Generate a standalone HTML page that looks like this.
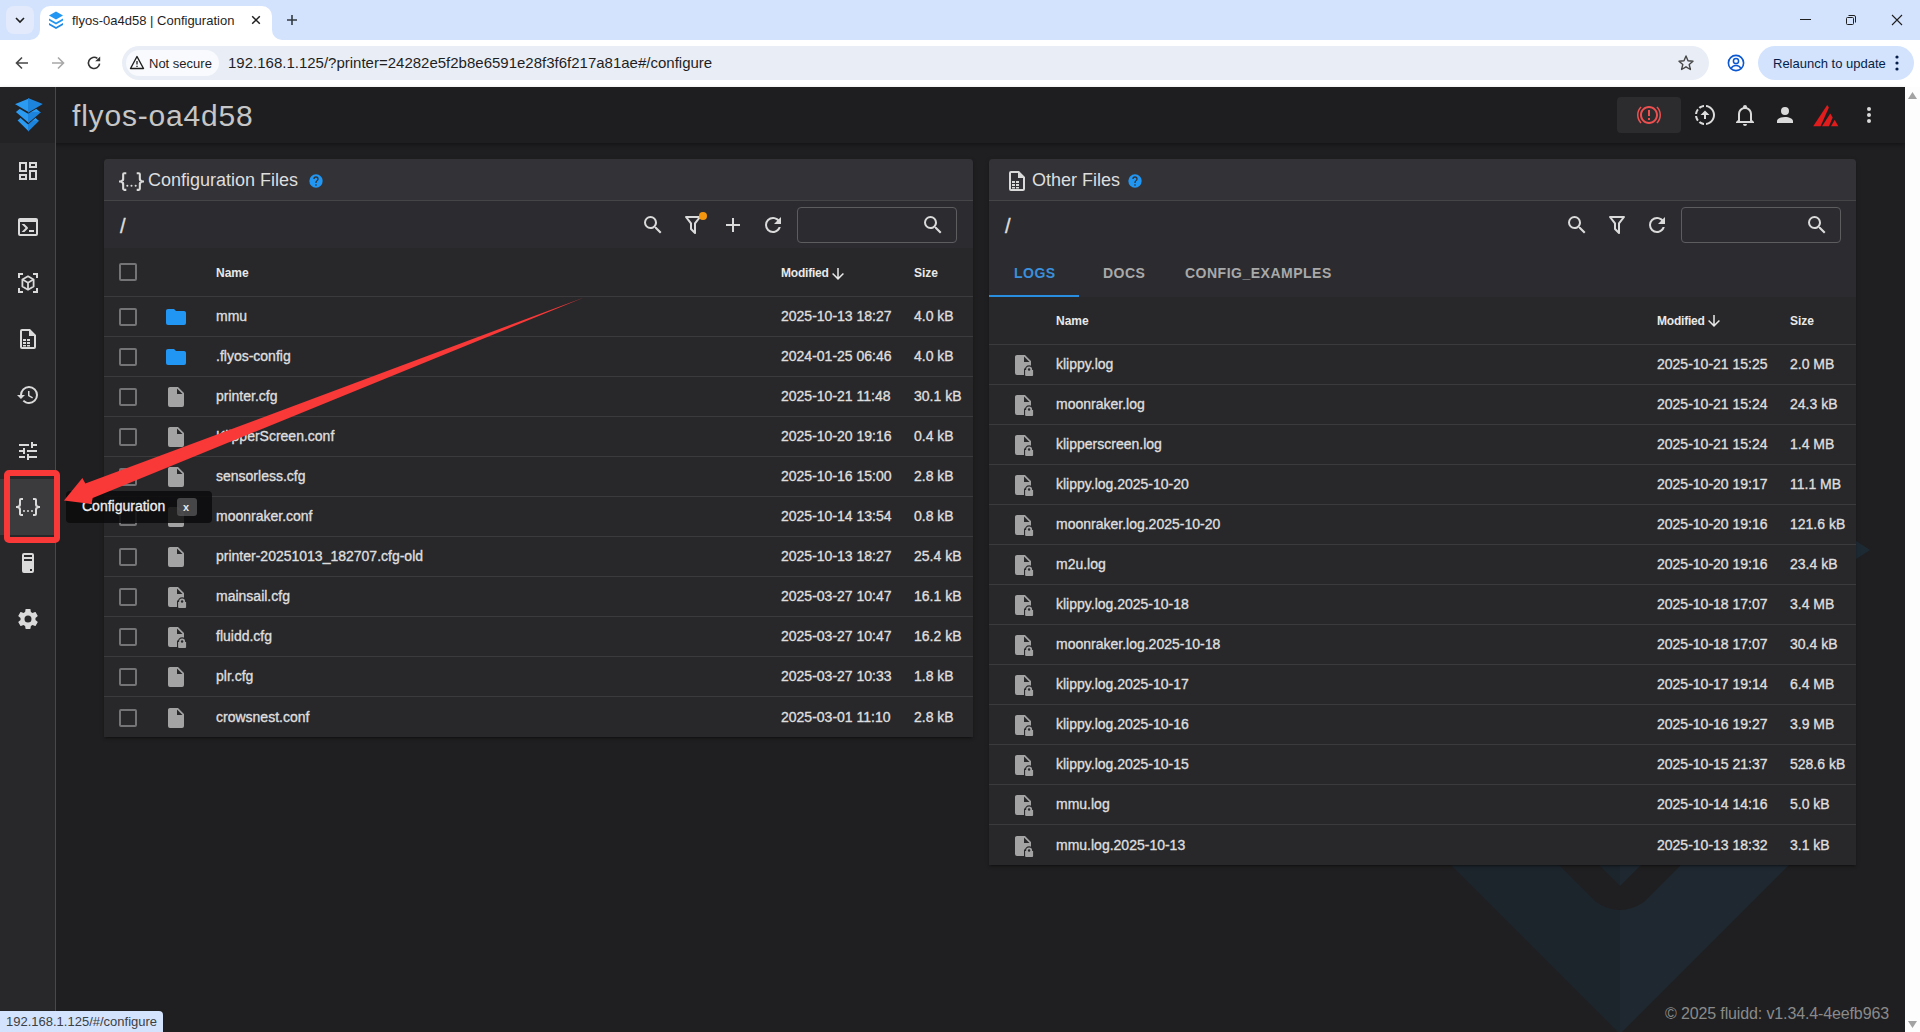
<!DOCTYPE html>
<html><head><meta charset="utf-8"><title>fluidd</title><style>
*{margin:0;padding:0;box-sizing:border-box}
html,body{width:1920px;height:1032px;overflow:hidden;background:#1f1f21;font-family:"Liberation Sans",sans-serif}
.a{position:absolute}
.t{position:absolute;white-space:nowrap;line-height:1}
</style></head><body>
<div class="a" style="left:0;top:0;width:1920px;height:40px;background:#d3e3fd"></div>
<div class="a" style="left:40px;top:6px;width:232px;height:34px;background:#fff;border-radius:10px 10px 0 0"></div>
<div class="a" style="left:30px;top:30px;width:10px;height:10px;background:#fff"></div><div class="a" style="left:30px;top:30px;width:10px;height:10px;background:#d3e3fd;border-radius:0 0 10px 0"></div>
<div class="a" style="left:272px;top:30px;width:10px;height:10px;background:#fff"></div><div class="a" style="left:272px;top:30px;width:10px;height:10px;background:#d3e3fd;border-radius:0 0 0 10px"></div>
<div class="a" style="left:6px;top:6px;width:28px;height:28px;border-radius:8px;background:#e2eafb"></div>
<svg class="a" style="left:13px;top:13px" width="14" height="14" viewBox="0 0 14 14"><path d="M3,5 L7,9 L11,5" fill="none" stroke="#1f1f1f" stroke-width="1.6"/></svg>
<div class="t" style="left:72px;top:14px;font-size:13px;color:#1f1f1f">flyos-0a4d58 | Configuration</div>
<svg class="a" style="left:48px;top:11px" width="16" height="18" viewBox="0 0 30 36"><path d="M15,1L29,9L15,17L1,9Z" fill="#2196f3"/><path d="M1,15L15,23L29,15L29,19L15,27L1,19Z" fill="#2196f3"/><path d="M1,24L15,32L29,24L29,28L15,36L1,28Z" fill="#1e88e5"/></svg>
<svg class="a" style="left:250px;top:14px" width="12" height="12" viewBox="0 0 12 12"><path d="M2.2,2.2L9.8,9.8M9.8,2.2L2.2,9.8" stroke="#1f1f1f" stroke-width="1.5"/></svg>
<svg class="a" style="left:285px;top:13px" width="14" height="14" viewBox="0 0 14 14"><path d="M7,2V12M2,7H12" stroke="#333a40" stroke-width="1.6"/></svg>
<div class="a" style="left:1800px;top:19px;width:11px;height:1px;background:#1f1f1f"></div>
<svg class="a" style="left:1845px;top:14px" width="12" height="12" viewBox="0 0 12 12"><rect x="1.5" y="3.5" width="7" height="7" rx="1" fill="none" stroke="#1f1f1f" stroke-width="1"/><path d="M3.5,1.5H9Q10.5,1.5 10.5,3V8.5" fill="none" stroke="#1f1f1f" stroke-width="1"/></svg>
<svg class="a" style="left:1891px;top:14px" width="12" height="12" viewBox="0 0 12 12"><path d="M1,1L11,11M11,1L1,11" stroke="#1f1f1f" stroke-width="1.1"/></svg>
<div class="a" style="left:0;top:40px;width:1920px;height:47px;background:#ffffff"></div>
<svg class="a" style="left:14px;top:55px" width="16" height="16" viewBox="0 0 16 16"><path d="M14,8H2.5M8,2.5L2.5,8L8,13.5" fill="none" stroke="#474747" stroke-width="1.6"/></svg>
<svg class="a" style="left:50px;top:55px" width="16" height="16" viewBox="0 0 16 16"><path d="M2,8H13.5M8,2.5L13.5,8L8,13.5" fill="none" stroke="#a8a8a8" stroke-width="1.6"/></svg>
<svg class="a" style="left:86px;top:55px" width="16" height="16" viewBox="0 0 16 16"><path d="M13.6,8.6A5.6,5.6 0 1,1 11.4,3.4" fill="none" stroke="#333" stroke-width="1.6"/><path d="M9.2,6.2L14.2,1.6V6.2Z" fill="#333"/></svg>
<div class="a" style="left:122px;top:46px;width:1587px;height:34px;border-radius:17px;background:#e9eef6"></div>
<div class="a" style="left:126px;top:50px;width:93px;height:26px;border-radius:13px;background:#f8fafd"></div>
<svg class="a" style="left:129px;top:55px" width="16" height="15" viewBox="0 0 16 15"><path d="M8,1.5L14.5,13.5H1.5Z" fill="none" stroke="#1f1f1f" stroke-width="1.4" stroke-linejoin="round"/><path d="M8,6V9.5M8,10.8V12" stroke="#1f1f1f" stroke-width="1.3"/></svg>
<div class="t" style="left:149px;top:57px;font-size:13px;color:#1f1f1f">Not secure</div>
<div class="t" style="left:228px;top:55px;font-size:15px;color:#1f1f1f">192.168.1.125/?printer=24282e5f2b8e6591e28f3f6f217a81ae#/configure</div>
<svg class="a" style="left:1677px;top:54px" width="18" height="18" viewBox="0 0 18 18"><path d="M9,2L11,6.8L16,7.2L12.2,10.5L13.4,15.5L9,12.8L4.6,15.5L5.8,10.5L2,7.2L7,6.8Z" fill="none" stroke="#474747" stroke-width="1.4" stroke-linejoin="round"/></svg>
<svg class="a" style="left:1726px;top:53px" width="20" height="20" viewBox="0 0 20 20"><circle cx="10" cy="10" r="7.6" fill="none" stroke="#0b57d0" stroke-width="1.6"/><circle cx="10" cy="8" r="2.6" fill="none" stroke="#0b57d0" stroke-width="1.5"/><path d="M5.2,15.2C6.5,13 8,12.4 10,12.4C12,12.4 13.5,13 14.8,15.2" fill="none" stroke="#0b57d0" stroke-width="1.5"/></svg>
<div class="a" style="left:1758px;top:46px;width:156px;height:34px;border-radius:17px;background:#d3e3fd"></div>
<div class="t" style="left:1773px;top:57px;font-size:13px;color:#041e49">Relaunch to update</div>
<svg class="a" style="left:1892px;top:54px" width="10" height="18" viewBox="0 0 10 18"><circle cx="5" cy="3" r="1.6" fill="#041e49"/><circle cx="5" cy="9" r="1.6" fill="#041e49"/><circle cx="5" cy="15" r="1.6" fill="#041e49"/></svg>
<div class="a" style="left:0;top:87px;width:1905px;height:945px;background:#1f1f21;overflow:hidden" id="pg">
</div>
<svg class="a" style="left:0;top:0" width="1905" height="1032" viewBox="0 0 1905 1032"><path d="M1446,860L1620,1034L1620,860Z" fill="#1d252c"/><path d="M1620,860L1620,1034L1794,860Z" fill="#1f2830"/><path d="M1554,860L1596,902Q1620,918 1644,902L1686,860Z" fill="#1f1f21"/><path d="M1594,860L1620,886L1620,860Z" fill="#1d252c"/><path d="M1620,860L1620,886L1646,860Z" fill="#1f2830"/><path d="M1850,537L1870,550L1850,563Z" fill="#1e2a33"/></svg>
<div class="a" style="left:0;top:87px;width:1905px;height:56px;background:#1e1e20;box-shadow:0 2px 4px rgba(0,0,0,.35)"></div>
<div class="a" style="left:0;top:87px;width:55px;height:56px;background:#232325"></div>
<svg class="a" style="left:0;top:86px" width="56" height="56" viewBox="0 0 56 56"><g stroke="#232325" stroke-width="1.6" stroke-linejoin="round"><path d="M28,23.5L39.4,34.5L28,45.7L16.6,34.5Z" fill="#2b9bf2"/><path d="M28,34.5L39.4,34.5L28,45.7Z" fill="#1c84dc" stroke="none"/><path d="M28,15L41.2,26L28,37.3L14.8,26Z" fill="#2b9bf2"/><path d="M28,26L41.2,26L28,37.3Z" fill="#1c84dc" stroke="none"/><path d="M28,12L42.8,18L28,26.7L13.2,18Z" fill="#2b9bf2"/><path d="M28,12L42.8,18L28,26.7Z" fill="#1c84dc" stroke="none"/></g></svg>
<div class="t" style="left:72px;top:101px;font-size:30px;color:#c6c6c6;letter-spacing:0.8px">flyos-oa4d58</div>
<div class="a" style="left:1617px;top:97px;width:64px;height:36px;border-radius:4px;background:#2c2c2f"></div>
<svg class="a" style="left:1637px;top:103px" width="24" height="24" viewBox="0 0 24 24"><path fill="#ee5050" d="M11,15H13V17H11V15M11,7H13V13H11V7M12,3C16.97,3 21,7.03 21,12C21,16.97 16.97,21 12,21C7.03,21 3,16.97 3,12C3,7.03 7.03,3 12,3M12,5C8.14,5 5,8.14 5,12C5,15.86 8.14,19 12,19C15.86,19 19,15.86 19,12C19,8.14 15.86,5 12,5M20.5,20.5C22.66,18.31 24,15.31 24,12C24,8.69 22.66,5.69 20.5,3.5L19.42,4.58C21.32,6.5 22.5,9.11 22.5,12C22.5,14.9 21.32,17.5 19.42,19.42L20.5,20.5M4.58,19.42C2.68,17.5 1.5,14.9 1.5,12C1.5,9.11 2.68,6.5 4.58,4.58L3.5,3.5C1.34,5.69 0,8.69 0,12C0,15.31 1.34,18.31 3.5,20.5L4.58,19.42Z"/></svg>
<svg class="a" style="left:1693px;top:103px" width="24" height="24" viewBox="0 0 24 24"><path fill="#dcdcdc" d="M13,2.03V2.05L13,4.05C17.39,4.59 20.5,8.58 19.96,12.97C19.5,16.61 16.64,19.5 13,19.93V21.93C18.5,21.38 22.5,16.5 21.95,11C21.5,6.25 17.73,2.5 13,2.03M11,2.06C9.05,2.25 7.19,3 5.67,4.26L7.1,5.74C8.22,4.84 9.57,4.26 11,4.06V2.06M4.26,5.67C3,7.19 2.25,9.04 2.05,11H4.05C4.24,9.58 4.8,8.23 5.69,7.1L4.26,5.67M2.06,13C2.26,14.96 3.03,16.81 4.27,18.33L5.69,16.9C4.81,15.77 4.24,14.42 4.06,13H2.06M7.1,18.37L5.67,19.74C7.18,21 9.04,21.79 11,22V20C9.58,19.82 8.23,19.25 7.1,18.37M12,7.5L16.5,12H13V16H11V12H7.5L12,7.5Z"/></svg>
<svg class="a" style="left:1733px;top:103px;" width="24" height="24" viewBox="0 0 24 24"><path fill="#dadada" d="M10,21H14A2,2 0 0,1 12,23A2,2 0 0,1 10,21M21,19V20H3V19L5,17V11C5,7.9 7.03,5.17 10,4.29C10,4.19 10,4.1 10,4A2,2 0 0,1 12,2A2,2 0 0,1 14,4C14,4.1 14,4.19 14,4.29C16.97,5.17 19,7.9 19,11V17L21,19M17,11A5,5 0 0,0 12,6A5,5 0 0,0 7,11V18H17V11Z"/></svg>
<svg class="a" style="left:1773px;top:103px;" width="24" height="24" viewBox="0 0 24 24"><path fill="#dadada" d="M12,4A4,4 0 0,1 16,8A4,4 0 0,1 12,12A4,4 0 0,1 8,8A4,4 0 0,1 12,4M12,14C16.42,14 20,15.79 20,18V20H4V18C4,15.79 7.58,14 12,14Z"/></svg>
<svg class="a" style="left:1812px;top:104px" width="28" height="24" viewBox="0 0 28 24"><path d="M1.2,22.3L15.2,0.9L16.9,3.6L8.6,22.3Z" fill="#e01c1c"/><path d="M10,22.3L18.3,9.6L20.7,13.4L17,22.3Z" fill="#e01c1c"/><path d="M19,22.3L22.7,15.7L26.3,22.3Z" fill="#e01c1c"/></svg>
<svg class="a" style="left:1857px;top:103px;" width="24" height="24" viewBox="0 0 24 24"><path fill="#dadada" d="M12,16A2,2 0 0,1 14,18A2,2 0 0,1 12,20A2,2 0 0,1 10,18A2,2 0 0,1 12,16M12,10A2,2 0 0,1 14,12A2,2 0 0,1 12,14A2,2 0 0,1 10,12A2,2 0 0,1 12,10M12,4A2,2 0 0,1 14,6A2,2 0 0,1 12,8A2,2 0 0,1 10,6A2,2 0 0,1 12,4Z"/></svg>
<div class="a" style="left:0;top:143px;width:55px;height:889px;background:#28282b"></div>
<div class="a" style="left:55px;top:87px;width:1px;height:945px;background:#48484b"></div>
<div class="a" style="left:0;top:479px;width:55px;height:56px;background:#3b3b3e"></div>
<svg class="a" style="left:16px;top:159px;" width="24" height="24" viewBox="0 0 24 24"><path fill="#dadada" d="M19,5V7H15V5H19M9,5V11H5V5H9M19,13V19H15V13H19M9,17V19H5V17H9M21,3H13V9H21V3M11,3H3V13H11V3M21,11H13V21H21V11M11,15H3V21H11V15Z"/></svg>
<svg class="a" style="left:16px;top:215px;" width="24" height="24" viewBox="0 0 24 24"><path fill="#dadada" d="M20,19V7H4V19H20M20,3A2,2 0 0,1 22,5V19A2,2 0 0,1 20,21H4A2,2 0 0,1 2,19V5C2,3.89 2.9,3 4,3H20M13,17V15H18V17H13M9.58,13L5.57,9H8.4L11.7,12.3C12.09,12.69 12.09,13.33 11.7,13.72L8.42,17H5.59L9.58,13Z"/></svg>
<svg class="a" style="left:16px;top:271px" width="24" height="24" viewBox="0 0 24 24"><path d="M3,7V3H7M17,3H21V7M21,17V21H17M7,21H3V17" fill="none" stroke="#dadada" stroke-width="2"/><path d="M12,5.3L17.6,8.5V15.5L12,18.7L6.4,15.5V8.5Z" fill="none" stroke="#dadada" stroke-width="1.8" stroke-linejoin="round"/><path d="M6.6,8.6L12,11.8L17.4,8.6M12,11.8V18.5" fill="none" stroke="#dadada" stroke-width="1.8"/></svg>
<svg class="a" style="left:16px;top:327px" width="24" height="24" viewBox="0 0 24 24"><path d="M14,2H6A2,2 0 0,0 4,4V20A2,2 0 0,0 6,22H18A2,2 0 0,0 20,20V8L14,2M18,20H6V4H13V9H18V20Z" fill="#dadada"/><path d="M7,12H10V14H7ZM11,12H14V14H11ZM7,15H10V17H7ZM11,15H14V17H11ZM7,18H10V19.5H7ZM11,18H14V19.5H11Z" fill="#dadada"/></svg>
<svg class="a" style="left:16px;top:383px;" width="24" height="24" viewBox="0 0 24 24"><path fill="#dadada" d="M13.5,8H12V13L16.28,15.54L17,14.33L13.5,12.25V8M13,3A9,9 0 0,0 4,12H1L4.96,16.03L9,12H6A7,7 0 0,1 13,5A7,7 0 0,1 20,12A7,7 0 0,1 13,19C11.07,19 9.32,18.21 8.06,16.94L6.64,18.36C8.27,20 10.5,21 13,21A9,9 0 0,0 22,12A9,9 0 0,0 13,3"/></svg>
<svg class="a" style="left:16px;top:439px;" width="24" height="24" viewBox="0 0 24 24"><path fill="#dadada" d="M3,17V19H9V17H3M3,5V7H13V5H3M13,21V19H21V17H13V15H11V21H13M7,9V11H3V13H7V15H9V9H7M21,13V11H11V13H21M15,9H17V7H21V5H17V3H15V9Z"/></svg>
<svg class="a" style="left:16px;top:495px;" width="24" height="24" viewBox="0 0 24 24"><path fill="#dadada" d="M5,3H7V5H5V10A2,2 0 0,1 3,12A2,2 0 0,1 5,14V19H7V21H5C3.93,20.73 3,20.1 3,19V15A2,2 0 0,0 1,13H0V11H1A2,2 0 0,0 3,9V5A2,2 0 0,1 5,3M19,3A2,2 0 0,1 21,5V9A2,2 0 0,0 23,11H24V13H23A2,2 0 0,0 21,15V19A2,2 0 0,1 19,21H17V19H19V14A2,2 0 0,1 21,12A2,2 0 0,1 19,10V5H17V3H19M12,15A1,1 0 0,1 13,16A1,1 0 0,1 12,17A1,1 0 0,1 11,16A1,1 0 0,1 12,15M8,15A1,1 0 0,1 9,16A1,1 0 0,1 8,17A1,1 0 0,1 7,16A1,1 0 0,1 8,15M16,15A1,1 0 0,1 17,16A1,1 0 0,1 16,17A1,1 0 0,1 15,16A1,1 0 0,1 16,15Z"/></svg>
<svg class="a" style="left:16px;top:551px" width="24" height="24" viewBox="0 0 24 24"><path d="M8,2H16A2,2 0 0,1 18,4V20A2,2 0 0,1 16,22H8A2,2 0 0,1 6,20V4A2,2 0 0,1 8,2M8,4V6H16V4H8M16,8H8V10H16V8M16,18H14V20H16V18Z" fill="#dadada"/></svg>
<svg class="a" style="left:16px;top:607px;" width="24" height="24" viewBox="0 0 24 24"><path fill="#dadada" d="M12,15.5A3.5,3.5 0 0,1 8.5,12A3.5,3.5 0 0,1 12,8.5A3.5,3.5 0 0,1 15.5,12A3.5,3.5 0 0,1 12,15.5M19.43,12.97C19.47,12.65 19.5,12.33 19.5,12C19.5,11.67 19.47,11.34 19.43,11L21.54,9.37C21.73,9.22 21.78,8.95 21.66,8.73L19.66,5.27C19.54,5.05 19.27,4.96 19.05,5.05L16.56,6.05C16.04,5.66 15.5,5.32 14.87,5.07L14.5,2.42C14.46,2.18 14.25,2 14,2H10C9.75,2 9.54,2.18 9.5,2.42L9.13,5.07C8.5,5.32 7.96,5.66 7.44,6.05L4.95,5.05C4.73,4.96 4.46,5.05 4.34,5.27L2.34,8.73C2.21,8.95 2.27,9.22 2.46,9.37L4.57,11C4.53,11.34 4.5,11.67 4.5,12C4.5,12.33 4.53,12.65 4.57,12.97L2.46,14.63C2.27,14.78 2.21,15.05 2.34,15.27L4.34,18.73C4.46,18.95 4.73,19.03 4.95,18.95L7.44,17.94C7.96,18.34 8.5,18.68 9.13,18.93L9.5,21.58C9.54,21.82 9.75,22 10,22H14C14.25,22 14.46,21.82 14.5,21.58L14.87,18.93C15.5,18.67 16.04,18.34 16.56,17.94L19.05,18.95C19.27,19.03 19.54,18.95 19.66,18.73L21.66,15.27C21.78,15.05 21.73,14.78 21.54,14.63L19.43,12.97Z"/></svg>
<div class="a" style="left:4px;top:470px;width:56px;height:73px;border:6px solid #f93838;border-radius:5px"></div>
<div class="a" style="left:104px;top:159px;width:869px;height:578px;background:#28282b;border-radius:4px 4px 0 0;box-shadow:0 3px 1px -2px rgba(0,0,0,.2),0 2px 2px 0 rgba(0,0,0,.14),0 1px 5px 0 rgba(0,0,0,.12);overflow:hidden">
<div class="a" style="left:0;top:0;width:869px;height:42px;background:#333337;border-bottom:1px solid #454548"></div>
<div class="a" style="left:0;top:42px;width:869px;height:47px;background:#2c2c30"></div>
</div>
<svg class="a" style="left:119px;top:169px;" width="25" height="25" viewBox="0 0 24 24"><path fill="#dadada" d="M5,3H7V5H5V10A2,2 0 0,1 3,12A2,2 0 0,1 5,14V19H7V21H5C3.93,20.73 3,20.1 3,19V15A2,2 0 0,0 1,13H0V11H1A2,2 0 0,0 3,9V5A2,2 0 0,1 5,3M19,3A2,2 0 0,1 21,5V9A2,2 0 0,0 23,11H24V13H23A2,2 0 0,0 21,15V19A2,2 0 0,1 19,21H17V19H19V14A2,2 0 0,1 21,12A2,2 0 0,1 19,10V5H17V3H19M12,15A1,1 0 0,1 13,16A1,1 0 0,1 12,17A1,1 0 0,1 11,16A1,1 0 0,1 12,15M8,15A1,1 0 0,1 9,16A1,1 0 0,1 8,17A1,1 0 0,1 7,16A1,1 0 0,1 8,15M16,15A1,1 0 0,1 17,16A1,1 0 0,1 16,17A1,1 0 0,1 15,16A1,1 0 0,1 16,15Z"/></svg>
<div class="t" style="left:148px;top:171px;font-size:18px;color:#dedede">Configuration Files</div>
<svg class="a" style="left:308px;top:173px;" width="16" height="16" viewBox="0 0 24 24"><path fill="#2196f3" d="M15.07,11.25L14.17,12.17C13.45,12.89 13,13.5 13,15H11V14.5C11,13.39 11.45,12.39 12.17,11.67L13.41,10.41C13.78,10.05 14,9.55 14,9C14,7.89 13.1,7 12,7A2,2 0 0,0 10,9H8A4,4 0 0,1 12,5A4,4 0 0,1 16,9C16,9.88 15.64,10.67 15.07,11.25M13,19H11V17H13M12,2A10,10 0 0,0 2,12A10,10 0 0,0 12,22A10,10 0 0,0 22,12C22,6.47 17.5,2 12,2Z"/></svg>
<div class="t" style="left:120px;top:216px;font-size:20px;color:#dedede;-webkit-text-stroke:0.4px #dedede">/</div>
<svg class="a" style="left:640.5px;top:213px;" width="24" height="24" viewBox="0 0 24 24"><path fill="#dadada" d="M9.5,3A6.5,6.5 0 0,1 16,9.5C16,11.11 15.41,12.59 14.44,13.73L14.71,14H15.5L20.5,19L19,20.5L14,15.5V14.71L13.73,14.44C12.59,15.41 11.11,16 9.5,16A6.5,6.5 0 0,1 3,9.5A6.5,6.5 0 0,1 9.5,3M9.5,5C7,5 5,7 5,9.5C5,12 7,14 9.5,14C12,14 14,12 14,9.5C14,7 12,5 9.5,5Z"/></svg>
<svg class="a" style="left:681px;top:213px;" width="24" height="24" viewBox="0 0 24 24"><path fill="#dadada" d="M15,19.88C15.04,20.18 14.94,20.5 14.71,20.71C14.32,21.1 13.69,21.1 13.3,20.71L9.29,16.7C9.06,16.47 8.96,16.16 9,15.87V10.75L4.21,4.62C3.87,4.19 3.95,3.56 4.38,3.22C4.57,3.08 4.78,3 5,3V3H19V3C19.22,3 19.43,3.08 19.62,3.22C20.05,3.56 20.13,4.19 19.79,4.62L15,10.75V19.88M7.04,5L11,10.06V15.58L13,17.58V10.05L16.96,5H7.04Z"/></svg>
<div class="a" style="left:699px;top:211.5px;width:8px;height:8px;border-radius:50%;background:#f5960f"></div>
<svg class="a" style="left:721px;top:213px;" width="24" height="24" viewBox="0 0 24 24"><path fill="#dadada" d="M19,13H13V19H11V13H5V11H11V5H13V11H19V13Z"/></svg>
<svg class="a" style="left:761px;top:213px;" width="24" height="24" viewBox="0 0 24 24"><path fill="#dadada" d="M17.65,6.35C16.2,4.9 14.21,4 12,4A8,8 0 0,0 4,12A8,8 0 0,0 12,20C15.73,20 18.84,17.45 19.73,14H17.65C16.83,16.33 14.61,18 12,18A6,6 0 0,1 6,12A6,6 0 0,1 12,6C13.66,6 15.14,6.69 16.22,7.78L13,11H20V4L17.65,6.35Z"/></svg>
<div class="a" style="left:797px;top:207px;width:160px;height:36px;border:1px solid #5d5d60;border-radius:4px"></div>
<svg class="a" style="left:920.5px;top:213px;" width="24" height="24" viewBox="0 0 24 24"><path fill="#dadada" d="M9.5,3A6.5,6.5 0 0,1 16,9.5C16,11.11 15.41,12.59 14.44,13.73L14.71,14H15.5L20.5,19L19,20.5L14,15.5V14.71L13.73,14.44C12.59,15.41 11.11,16 9.5,16A6.5,6.5 0 0,1 3,9.5A6.5,6.5 0 0,1 9.5,3M9.5,5C7,5 5,7 5,9.5C5,12 7,14 9.5,14C12,14 14,12 14,9.5C14,7 12,5 9.5,5Z"/></svg>
<div class="a" style="left:119px;top:263px;width:18px;height:18px;border:2px solid #747477;border-radius:2px"></div>
<div class="t" style="left:216px;top:267px;font-size:12px;font-weight:bold;color:#e8e8e8">Name</div>
<div class="t" style="left:781px;top:267px;font-size:12px;font-weight:bold;letter-spacing:-0.2px;color:#e8e8e8">Modified</div>
<svg class="a" style="left:829px;top:264.5px;" width="18" height="18" viewBox="0 0 24 24"><path fill="#e8e8e8" d="M11,4H13V16L18.5,10.5L19.92,11.92L12,19.84L4.08,11.92L5.5,10.5L11,16V4Z"/></svg>
<div class="t" style="left:914px;top:267px;font-size:12px;font-weight:bold;color:#e8e8e8">Size</div>
<div class="a" style="left:104px;top:296px;width:869px;height:1px;background:#3b3b3e"></div>
<div class="a" style="left:119px;top:308px;width:18px;height:18px;border:2px solid #747477;border-radius:2px"></div>
<svg class="a" style="left:164px;top:305px;" width="24" height="24" viewBox="0 0 24 24"><path fill="#2196f3" d="M10,4H4C2.89,4 2,4.89 2,6V18A2,2 0 0,0 4,20H20A2,2 0 0,0 22,18V8C22,6.89 21.1,6 20,6H12L10,4Z"/></svg>
<div class="t" style="left:216px;top:309px;font-size:14px;color:#dedede;-webkit-text-stroke:0.35px #dedede">mmu</div>
<div class="t" style="left:781px;top:309px;font-size:14px;color:#dedede;-webkit-text-stroke:0.35px #dedede">2025-10-13 18:27</div>
<div class="t" style="left:914px;top:309px;font-size:14px;color:#dedede;-webkit-text-stroke:0.35px #dedede">4.0 kB</div>
<div class="a" style="left:104px;top:336px;width:869px;height:1px;background:#3b3b3e"></div>
<div class="a" style="left:119px;top:348px;width:18px;height:18px;border:2px solid #747477;border-radius:2px"></div>
<svg class="a" style="left:164px;top:345px;" width="24" height="24" viewBox="0 0 24 24"><path fill="#2196f3" d="M10,4H4C2.89,4 2,4.89 2,6V18A2,2 0 0,0 4,20H20A2,2 0 0,0 22,18V8C22,6.89 21.1,6 20,6H12L10,4Z"/></svg>
<div class="t" style="left:216px;top:349px;font-size:14px;color:#dedede;-webkit-text-stroke:0.35px #dedede">.flyos-config</div>
<div class="t" style="left:781px;top:349px;font-size:14px;color:#dedede;-webkit-text-stroke:0.35px #dedede">2024-01-25 06:46</div>
<div class="t" style="left:914px;top:349px;font-size:14px;color:#dedede;-webkit-text-stroke:0.35px #dedede">4.0 kB</div>
<div class="a" style="left:104px;top:376px;width:869px;height:1px;background:#3b3b3e"></div>
<div class="a" style="left:119px;top:388px;width:18px;height:18px;border:2px solid #747477;border-radius:2px"></div>
<svg class="a" style="left:164px;top:385px;" width="24" height="24" viewBox="0 0 24 24"><path fill="#a3a3a3" d="M13,9V3.5L18.5,9M6,2C4.89,2 4,2.89 4,4V20A2,2 0 0,0 6,22H18A2,2 0 0,0 20,20V8L14,2H6Z"/></svg>
<div class="t" style="left:216px;top:389px;font-size:14px;color:#dedede;-webkit-text-stroke:0.35px #dedede">printer.cfg</div>
<div class="t" style="left:781px;top:389px;font-size:14px;color:#dedede;-webkit-text-stroke:0.35px #dedede">2025-10-21 11:48</div>
<div class="t" style="left:914px;top:389px;font-size:14px;color:#dedede;-webkit-text-stroke:0.35px #dedede">30.1 kB</div>
<div class="a" style="left:104px;top:416px;width:869px;height:1px;background:#3b3b3e"></div>
<div class="a" style="left:119px;top:428px;width:18px;height:18px;border:2px solid #747477;border-radius:2px"></div>
<svg class="a" style="left:164px;top:425px;" width="24" height="24" viewBox="0 0 24 24"><path fill="#a3a3a3" d="M13,9V3.5L18.5,9M6,2C4.89,2 4,2.89 4,4V20A2,2 0 0,0 6,22H18A2,2 0 0,0 20,20V8L14,2H6Z"/></svg>
<div class="t" style="left:216px;top:429px;font-size:14px;color:#dedede;-webkit-text-stroke:0.35px #dedede">KlipperScreen.conf</div>
<div class="t" style="left:781px;top:429px;font-size:14px;color:#dedede;-webkit-text-stroke:0.35px #dedede">2025-10-20 19:16</div>
<div class="t" style="left:914px;top:429px;font-size:14px;color:#dedede;-webkit-text-stroke:0.35px #dedede">0.4 kB</div>
<div class="a" style="left:104px;top:456px;width:869px;height:1px;background:#3b3b3e"></div>
<div class="a" style="left:119px;top:468px;width:18px;height:18px;border:2px solid #747477;border-radius:2px"></div>
<svg class="a" style="left:164px;top:465px;" width="24" height="24" viewBox="0 0 24 24"><path fill="#a3a3a3" d="M13,9V3.5L18.5,9M6,2C4.89,2 4,2.89 4,4V20A2,2 0 0,0 6,22H18A2,2 0 0,0 20,20V8L14,2H6Z"/></svg>
<div class="t" style="left:216px;top:469px;font-size:14px;color:#dedede;-webkit-text-stroke:0.35px #dedede">sensorless.cfg</div>
<div class="t" style="left:781px;top:469px;font-size:14px;color:#dedede;-webkit-text-stroke:0.35px #dedede">2025-10-16 15:00</div>
<div class="t" style="left:914px;top:469px;font-size:14px;color:#dedede;-webkit-text-stroke:0.35px #dedede">2.8 kB</div>
<div class="a" style="left:104px;top:496px;width:869px;height:1px;background:#3b3b3e"></div>
<div class="a" style="left:119px;top:508px;width:18px;height:18px;border:2px solid #747477;border-radius:2px"></div>
<svg class="a" style="left:164px;top:505px;" width="24" height="24" viewBox="0 0 24 24"><path fill="#a3a3a3" d="M13,9V3.5L18.5,9M6,2C4.89,2 4,2.89 4,4V20A2,2 0 0,0 6,22H18A2,2 0 0,0 20,20V8L14,2H6Z"/></svg>
<div class="t" style="left:216px;top:509px;font-size:14px;color:#dedede;-webkit-text-stroke:0.35px #dedede">moonraker.conf</div>
<div class="t" style="left:781px;top:509px;font-size:14px;color:#dedede;-webkit-text-stroke:0.35px #dedede">2025-10-14 13:54</div>
<div class="t" style="left:914px;top:509px;font-size:14px;color:#dedede;-webkit-text-stroke:0.35px #dedede">0.8 kB</div>
<div class="a" style="left:104px;top:536px;width:869px;height:1px;background:#3b3b3e"></div>
<div class="a" style="left:119px;top:548px;width:18px;height:18px;border:2px solid #747477;border-radius:2px"></div>
<svg class="a" style="left:164px;top:545px;" width="24" height="24" viewBox="0 0 24 24"><path fill="#a3a3a3" d="M13,9V3.5L18.5,9M6,2C4.89,2 4,2.89 4,4V20A2,2 0 0,0 6,22H18A2,2 0 0,0 20,20V8L14,2H6Z"/></svg>
<div class="t" style="left:216px;top:549px;font-size:14px;color:#dedede;-webkit-text-stroke:0.35px #dedede">printer-20251013_182707.cfg-old</div>
<div class="t" style="left:781px;top:549px;font-size:14px;color:#dedede;-webkit-text-stroke:0.35px #dedede">2025-10-13 18:27</div>
<div class="t" style="left:914px;top:549px;font-size:14px;color:#dedede;-webkit-text-stroke:0.35px #dedede">25.4 kB</div>
<div class="a" style="left:104px;top:576px;width:869px;height:1px;background:#3b3b3e"></div>
<div class="a" style="left:119px;top:588px;width:18px;height:18px;border:2px solid #747477;border-radius:2px"></div>
<svg class="a" style="left:164px;top:585px" width="24" height="24" viewBox="0 0 24 24"><path fill="#a3a3a3" d="M13,9V3.5L18.5,9M6,2C4.89,2 4,2.89 4,4V20A2,2 0 0,0 6,22H18A2,2 0 0,0 20,20V8L14,2H6Z"/><path fill="#28282b" d="M13,15.5H23.2V24H13ZM13.9,16.4A4.2,4.2 0 0,1 22.3,16.4V17H13.9Z"/><path fill="#a3a3a3" d="M15.1,16.6A3,3 0 0,1 21.1,16.6V17.2H15.1ZM14.1,16.9H22.1V22A1,1 0 0,1 21.1,23H15.1A1,1 0 0,1 14.1,22Z"/><circle cx="18.1" cy="16.5" r="1.2" fill="#28282b"/></svg>
<div class="t" style="left:216px;top:589px;font-size:14px;color:#dedede;-webkit-text-stroke:0.35px #dedede">mainsail.cfg</div>
<div class="t" style="left:781px;top:589px;font-size:14px;color:#dedede;-webkit-text-stroke:0.35px #dedede">2025-03-27 10:47</div>
<div class="t" style="left:914px;top:589px;font-size:14px;color:#dedede;-webkit-text-stroke:0.35px #dedede">16.1 kB</div>
<div class="a" style="left:104px;top:616px;width:869px;height:1px;background:#3b3b3e"></div>
<div class="a" style="left:119px;top:628px;width:18px;height:18px;border:2px solid #747477;border-radius:2px"></div>
<svg class="a" style="left:164px;top:625px" width="24" height="24" viewBox="0 0 24 24"><path fill="#a3a3a3" d="M13,9V3.5L18.5,9M6,2C4.89,2 4,2.89 4,4V20A2,2 0 0,0 6,22H18A2,2 0 0,0 20,20V8L14,2H6Z"/><path fill="#28282b" d="M13,15.5H23.2V24H13ZM13.9,16.4A4.2,4.2 0 0,1 22.3,16.4V17H13.9Z"/><path fill="#a3a3a3" d="M15.1,16.6A3,3 0 0,1 21.1,16.6V17.2H15.1ZM14.1,16.9H22.1V22A1,1 0 0,1 21.1,23H15.1A1,1 0 0,1 14.1,22Z"/><circle cx="18.1" cy="16.5" r="1.2" fill="#28282b"/></svg>
<div class="t" style="left:216px;top:629px;font-size:14px;color:#dedede;-webkit-text-stroke:0.35px #dedede">fluidd.cfg</div>
<div class="t" style="left:781px;top:629px;font-size:14px;color:#dedede;-webkit-text-stroke:0.35px #dedede">2025-03-27 10:47</div>
<div class="t" style="left:914px;top:629px;font-size:14px;color:#dedede;-webkit-text-stroke:0.35px #dedede">16.2 kB</div>
<div class="a" style="left:104px;top:656px;width:869px;height:1px;background:#3b3b3e"></div>
<div class="a" style="left:119px;top:668px;width:18px;height:18px;border:2px solid #747477;border-radius:2px"></div>
<svg class="a" style="left:164px;top:665px;" width="24" height="24" viewBox="0 0 24 24"><path fill="#a3a3a3" d="M13,9V3.5L18.5,9M6,2C4.89,2 4,2.89 4,4V20A2,2 0 0,0 6,22H18A2,2 0 0,0 20,20V8L14,2H6Z"/></svg>
<div class="t" style="left:216px;top:669px;font-size:14px;color:#dedede;-webkit-text-stroke:0.35px #dedede">plr.cfg</div>
<div class="t" style="left:781px;top:669px;font-size:14px;color:#dedede;-webkit-text-stroke:0.35px #dedede">2025-03-27 10:33</div>
<div class="t" style="left:914px;top:669px;font-size:14px;color:#dedede;-webkit-text-stroke:0.35px #dedede">1.8 kB</div>
<div class="a" style="left:104px;top:696px;width:869px;height:1px;background:#3b3b3e"></div>
<div class="a" style="left:119px;top:709px;width:18px;height:18px;border:2px solid #747477;border-radius:2px"></div>
<svg class="a" style="left:164px;top:706px;" width="24" height="24" viewBox="0 0 24 24"><path fill="#a3a3a3" d="M13,9V3.5L18.5,9M6,2C4.89,2 4,2.89 4,4V20A2,2 0 0,0 6,22H18A2,2 0 0,0 20,20V8L14,2H6Z"/></svg>
<div class="t" style="left:216px;top:710px;font-size:14px;color:#dedede;-webkit-text-stroke:0.35px #dedede">crowsnest.conf</div>
<div class="t" style="left:781px;top:710px;font-size:14px;color:#dedede;-webkit-text-stroke:0.35px #dedede">2025-03-01 11:10</div>
<div class="t" style="left:914px;top:710px;font-size:14px;color:#dedede;-webkit-text-stroke:0.35px #dedede">2.8 kB</div>
<div class="a" style="left:989px;top:159px;width:867px;height:706px;background:#28282b;border-radius:4px 4px 0 0;box-shadow:0 3px 1px -2px rgba(0,0,0,.2),0 2px 2px 0 rgba(0,0,0,.14),0 1px 5px 0 rgba(0,0,0,.12);overflow:hidden">
<div class="a" style="left:0;top:0;width:867px;height:42px;background:#333337;border-bottom:1px solid #454548"></div>
<div class="a" style="left:0;top:42px;width:867px;height:96px;background:#2c2c30"></div>
<div class="a" style="left:0;top:136px;width:90px;height:2px;background:#2a8ee0"></div>
</div>
<svg class="a" style="left:1005px;top:169px" width="24" height="24" viewBox="0 0 24 24"><path d="M14,2H6A2,2 0 0,0 4,4V20A2,2 0 0,0 6,22H18A2,2 0 0,0 20,20V8L14,2M18,20H6V4H13V9H18V20Z" fill="#dadada"/><path d="M7,12H10V14H7ZM11,12H14V14H11ZM7,15H10V17H7ZM11,15H14V17H11ZM7,18H10V19.5H7ZM11,18H14V19.5H11Z" fill="#dadada"/></svg>
<div class="t" style="left:1032px;top:171px;font-size:18px;color:#dedede">Other Files</div>
<svg class="a" style="left:1127px;top:172.5px;" width="16" height="16" viewBox="0 0 24 24"><path fill="#2196f3" d="M15.07,11.25L14.17,12.17C13.45,12.89 13,13.5 13,15H11V14.5C11,13.39 11.45,12.39 12.17,11.67L13.41,10.41C13.78,10.05 14,9.55 14,9C14,7.89 13.1,7 12,7A2,2 0 0,0 10,9H8A4,4 0 0,1 12,5A4,4 0 0,1 16,9C16,9.88 15.64,10.67 15.07,11.25M13,19H11V17H13M12,2A10,10 0 0,0 2,12A10,10 0 0,0 12,22A10,10 0 0,0 22,12C22,6.47 17.5,2 12,2Z"/></svg>
<div class="t" style="left:1005px;top:216px;font-size:20px;color:#dedede;-webkit-text-stroke:0.4px #dedede">/</div>
<svg class="a" style="left:1564.5px;top:213px;" width="24" height="24" viewBox="0 0 24 24"><path fill="#dadada" d="M9.5,3A6.5,6.5 0 0,1 16,9.5C16,11.11 15.41,12.59 14.44,13.73L14.71,14H15.5L20.5,19L19,20.5L14,15.5V14.71L13.73,14.44C12.59,15.41 11.11,16 9.5,16A6.5,6.5 0 0,1 3,9.5A6.5,6.5 0 0,1 9.5,3M9.5,5C7,5 5,7 5,9.5C5,12 7,14 9.5,14C12,14 14,12 14,9.5C14,7 12,5 9.5,5Z"/></svg>
<svg class="a" style="left:1605px;top:213px;" width="24" height="24" viewBox="0 0 24 24"><path fill="#dadada" d="M15,19.88C15.04,20.18 14.94,20.5 14.71,20.71C14.32,21.1 13.69,21.1 13.3,20.71L9.29,16.7C9.06,16.47 8.96,16.16 9,15.87V10.75L4.21,4.62C3.87,4.19 3.95,3.56 4.38,3.22C4.57,3.08 4.78,3 5,3V3H19V3C19.22,3 19.43,3.08 19.62,3.22C20.05,3.56 20.13,4.19 19.79,4.62L15,10.75V19.88M7.04,5L11,10.06V15.58L13,17.58V10.05L16.96,5H7.04Z"/></svg>
<svg class="a" style="left:1645px;top:213px;" width="24" height="24" viewBox="0 0 24 24"><path fill="#dadada" d="M17.65,6.35C16.2,4.9 14.21,4 12,4A8,8 0 0,0 4,12A8,8 0 0,0 12,20C15.73,20 18.84,17.45 19.73,14H17.65C16.83,16.33 14.61,18 12,18A6,6 0 0,1 6,12A6,6 0 0,1 12,6C13.66,6 15.14,6.69 16.22,7.78L13,11H20V4L17.65,6.35Z"/></svg>
<div class="a" style="left:1681px;top:207px;width:160px;height:36px;border:1px solid #5d5d60;border-radius:4px"></div>
<svg class="a" style="left:1804.5px;top:213px;" width="24" height="24" viewBox="0 0 24 24"><path fill="#dadada" d="M9.5,3A6.5,6.5 0 0,1 16,9.5C16,11.11 15.41,12.59 14.44,13.73L14.71,14H15.5L20.5,19L19,20.5L14,15.5V14.71L13.73,14.44C12.59,15.41 11.11,16 9.5,16A6.5,6.5 0 0,1 3,9.5A6.5,6.5 0 0,1 9.5,3M9.5,5C7,5 5,7 5,9.5C5,12 7,14 9.5,14C12,14 14,12 14,9.5C14,7 12,5 9.5,5Z"/></svg>
<div class="t" style="left:1014px;top:266px;font-size:14px;font-weight:bold;letter-spacing:0.5px;color:#3a90dc">LOGS</div>
<div class="t" style="left:1103px;top:266px;font-size:14px;font-weight:bold;letter-spacing:0.5px;color:#a9a9a9">DOCS</div>
<div class="t" style="left:1185px;top:266px;font-size:14px;font-weight:bold;letter-spacing:0.5px;color:#a9a9a9">CONFIG_EXAMPLES</div>
<div class="t" style="left:1056px;top:315px;font-size:12px;font-weight:bold;color:#e8e8e8">Name</div>
<div class="t" style="left:1657px;top:315px;font-size:12px;font-weight:bold;letter-spacing:-0.2px;color:#e8e8e8">Modified</div>
<svg class="a" style="left:1705px;top:311.5px;" width="18" height="18" viewBox="0 0 24 24"><path fill="#e8e8e8" d="M11,4H13V16L18.5,10.5L19.92,11.92L12,19.84L4.08,11.92L5.5,10.5L11,16V4Z"/></svg>
<div class="t" style="left:1790px;top:315px;font-size:12px;font-weight:bold;color:#e8e8e8">Size</div>
<div class="a" style="left:989px;top:344px;width:867px;height:1px;background:#3b3b3e"></div>
<svg class="a" style="left:1011px;top:353px" width="24" height="24" viewBox="0 0 24 24"><path fill="#a3a3a3" d="M13,9V3.5L18.5,9M6,2C4.89,2 4,2.89 4,4V20A2,2 0 0,0 6,22H18A2,2 0 0,0 20,20V8L14,2H6Z"/><path fill="#28282b" d="M13,15.5H23.2V24H13ZM13.9,16.4A4.2,4.2 0 0,1 22.3,16.4V17H13.9Z"/><path fill="#a3a3a3" d="M15.1,16.6A3,3 0 0,1 21.1,16.6V17.2H15.1ZM14.1,16.9H22.1V22A1,1 0 0,1 21.1,23H15.1A1,1 0 0,1 14.1,22Z"/><circle cx="18.1" cy="16.5" r="1.2" fill="#28282b"/></svg>
<div class="t" style="left:1056px;top:357px;font-size:14px;color:#dedede;-webkit-text-stroke:0.35px #dedede">klippy.log</div>
<div class="t" style="left:1657px;top:357px;font-size:14px;color:#dedede;-webkit-text-stroke:0.35px #dedede">2025-10-21 15:25</div>
<div class="t" style="left:1790px;top:357px;font-size:14px;color:#dedede;-webkit-text-stroke:0.35px #dedede">2.0 MB</div>
<div class="a" style="left:989px;top:384px;width:867px;height:1px;background:#3b3b3e"></div>
<svg class="a" style="left:1011px;top:393px" width="24" height="24" viewBox="0 0 24 24"><path fill="#a3a3a3" d="M13,9V3.5L18.5,9M6,2C4.89,2 4,2.89 4,4V20A2,2 0 0,0 6,22H18A2,2 0 0,0 20,20V8L14,2H6Z"/><path fill="#28282b" d="M13,15.5H23.2V24H13ZM13.9,16.4A4.2,4.2 0 0,1 22.3,16.4V17H13.9Z"/><path fill="#a3a3a3" d="M15.1,16.6A3,3 0 0,1 21.1,16.6V17.2H15.1ZM14.1,16.9H22.1V22A1,1 0 0,1 21.1,23H15.1A1,1 0 0,1 14.1,22Z"/><circle cx="18.1" cy="16.5" r="1.2" fill="#28282b"/></svg>
<div class="t" style="left:1056px;top:397px;font-size:14px;color:#dedede;-webkit-text-stroke:0.35px #dedede">moonraker.log</div>
<div class="t" style="left:1657px;top:397px;font-size:14px;color:#dedede;-webkit-text-stroke:0.35px #dedede">2025-10-21 15:24</div>
<div class="t" style="left:1790px;top:397px;font-size:14px;color:#dedede;-webkit-text-stroke:0.35px #dedede">24.3 kB</div>
<div class="a" style="left:989px;top:424px;width:867px;height:1px;background:#3b3b3e"></div>
<svg class="a" style="left:1011px;top:433px" width="24" height="24" viewBox="0 0 24 24"><path fill="#a3a3a3" d="M13,9V3.5L18.5,9M6,2C4.89,2 4,2.89 4,4V20A2,2 0 0,0 6,22H18A2,2 0 0,0 20,20V8L14,2H6Z"/><path fill="#28282b" d="M13,15.5H23.2V24H13ZM13.9,16.4A4.2,4.2 0 0,1 22.3,16.4V17H13.9Z"/><path fill="#a3a3a3" d="M15.1,16.6A3,3 0 0,1 21.1,16.6V17.2H15.1ZM14.1,16.9H22.1V22A1,1 0 0,1 21.1,23H15.1A1,1 0 0,1 14.1,22Z"/><circle cx="18.1" cy="16.5" r="1.2" fill="#28282b"/></svg>
<div class="t" style="left:1056px;top:437px;font-size:14px;color:#dedede;-webkit-text-stroke:0.35px #dedede">klipperscreen.log</div>
<div class="t" style="left:1657px;top:437px;font-size:14px;color:#dedede;-webkit-text-stroke:0.35px #dedede">2025-10-21 15:24</div>
<div class="t" style="left:1790px;top:437px;font-size:14px;color:#dedede;-webkit-text-stroke:0.35px #dedede">1.4 MB</div>
<div class="a" style="left:989px;top:464px;width:867px;height:1px;background:#3b3b3e"></div>
<svg class="a" style="left:1011px;top:473px" width="24" height="24" viewBox="0 0 24 24"><path fill="#a3a3a3" d="M13,9V3.5L18.5,9M6,2C4.89,2 4,2.89 4,4V20A2,2 0 0,0 6,22H18A2,2 0 0,0 20,20V8L14,2H6Z"/><path fill="#28282b" d="M13,15.5H23.2V24H13ZM13.9,16.4A4.2,4.2 0 0,1 22.3,16.4V17H13.9Z"/><path fill="#a3a3a3" d="M15.1,16.6A3,3 0 0,1 21.1,16.6V17.2H15.1ZM14.1,16.9H22.1V22A1,1 0 0,1 21.1,23H15.1A1,1 0 0,1 14.1,22Z"/><circle cx="18.1" cy="16.5" r="1.2" fill="#28282b"/></svg>
<div class="t" style="left:1056px;top:477px;font-size:14px;color:#dedede;-webkit-text-stroke:0.35px #dedede">klippy.log.2025-10-20</div>
<div class="t" style="left:1657px;top:477px;font-size:14px;color:#dedede;-webkit-text-stroke:0.35px #dedede">2025-10-20 19:17</div>
<div class="t" style="left:1790px;top:477px;font-size:14px;color:#dedede;-webkit-text-stroke:0.35px #dedede">11.1 MB</div>
<div class="a" style="left:989px;top:504px;width:867px;height:1px;background:#3b3b3e"></div>
<svg class="a" style="left:1011px;top:513px" width="24" height="24" viewBox="0 0 24 24"><path fill="#a3a3a3" d="M13,9V3.5L18.5,9M6,2C4.89,2 4,2.89 4,4V20A2,2 0 0,0 6,22H18A2,2 0 0,0 20,20V8L14,2H6Z"/><path fill="#28282b" d="M13,15.5H23.2V24H13ZM13.9,16.4A4.2,4.2 0 0,1 22.3,16.4V17H13.9Z"/><path fill="#a3a3a3" d="M15.1,16.6A3,3 0 0,1 21.1,16.6V17.2H15.1ZM14.1,16.9H22.1V22A1,1 0 0,1 21.1,23H15.1A1,1 0 0,1 14.1,22Z"/><circle cx="18.1" cy="16.5" r="1.2" fill="#28282b"/></svg>
<div class="t" style="left:1056px;top:517px;font-size:14px;color:#dedede;-webkit-text-stroke:0.35px #dedede">moonraker.log.2025-10-20</div>
<div class="t" style="left:1657px;top:517px;font-size:14px;color:#dedede;-webkit-text-stroke:0.35px #dedede">2025-10-20 19:16</div>
<div class="t" style="left:1790px;top:517px;font-size:14px;color:#dedede;-webkit-text-stroke:0.35px #dedede">121.6 kB</div>
<div class="a" style="left:989px;top:544px;width:867px;height:1px;background:#3b3b3e"></div>
<svg class="a" style="left:1011px;top:553px" width="24" height="24" viewBox="0 0 24 24"><path fill="#a3a3a3" d="M13,9V3.5L18.5,9M6,2C4.89,2 4,2.89 4,4V20A2,2 0 0,0 6,22H18A2,2 0 0,0 20,20V8L14,2H6Z"/><path fill="#28282b" d="M13,15.5H23.2V24H13ZM13.9,16.4A4.2,4.2 0 0,1 22.3,16.4V17H13.9Z"/><path fill="#a3a3a3" d="M15.1,16.6A3,3 0 0,1 21.1,16.6V17.2H15.1ZM14.1,16.9H22.1V22A1,1 0 0,1 21.1,23H15.1A1,1 0 0,1 14.1,22Z"/><circle cx="18.1" cy="16.5" r="1.2" fill="#28282b"/></svg>
<div class="t" style="left:1056px;top:557px;font-size:14px;color:#dedede;-webkit-text-stroke:0.35px #dedede">m2u.log</div>
<div class="t" style="left:1657px;top:557px;font-size:14px;color:#dedede;-webkit-text-stroke:0.35px #dedede">2025-10-20 19:16</div>
<div class="t" style="left:1790px;top:557px;font-size:14px;color:#dedede;-webkit-text-stroke:0.35px #dedede">23.4 kB</div>
<div class="a" style="left:989px;top:584px;width:867px;height:1px;background:#3b3b3e"></div>
<svg class="a" style="left:1011px;top:593px" width="24" height="24" viewBox="0 0 24 24"><path fill="#a3a3a3" d="M13,9V3.5L18.5,9M6,2C4.89,2 4,2.89 4,4V20A2,2 0 0,0 6,22H18A2,2 0 0,0 20,20V8L14,2H6Z"/><path fill="#28282b" d="M13,15.5H23.2V24H13ZM13.9,16.4A4.2,4.2 0 0,1 22.3,16.4V17H13.9Z"/><path fill="#a3a3a3" d="M15.1,16.6A3,3 0 0,1 21.1,16.6V17.2H15.1ZM14.1,16.9H22.1V22A1,1 0 0,1 21.1,23H15.1A1,1 0 0,1 14.1,22Z"/><circle cx="18.1" cy="16.5" r="1.2" fill="#28282b"/></svg>
<div class="t" style="left:1056px;top:597px;font-size:14px;color:#dedede;-webkit-text-stroke:0.35px #dedede">klippy.log.2025-10-18</div>
<div class="t" style="left:1657px;top:597px;font-size:14px;color:#dedede;-webkit-text-stroke:0.35px #dedede">2025-10-18 17:07</div>
<div class="t" style="left:1790px;top:597px;font-size:14px;color:#dedede;-webkit-text-stroke:0.35px #dedede">3.4 MB</div>
<div class="a" style="left:989px;top:624px;width:867px;height:1px;background:#3b3b3e"></div>
<svg class="a" style="left:1011px;top:633px" width="24" height="24" viewBox="0 0 24 24"><path fill="#a3a3a3" d="M13,9V3.5L18.5,9M6,2C4.89,2 4,2.89 4,4V20A2,2 0 0,0 6,22H18A2,2 0 0,0 20,20V8L14,2H6Z"/><path fill="#28282b" d="M13,15.5H23.2V24H13ZM13.9,16.4A4.2,4.2 0 0,1 22.3,16.4V17H13.9Z"/><path fill="#a3a3a3" d="M15.1,16.6A3,3 0 0,1 21.1,16.6V17.2H15.1ZM14.1,16.9H22.1V22A1,1 0 0,1 21.1,23H15.1A1,1 0 0,1 14.1,22Z"/><circle cx="18.1" cy="16.5" r="1.2" fill="#28282b"/></svg>
<div class="t" style="left:1056px;top:637px;font-size:14px;color:#dedede;-webkit-text-stroke:0.35px #dedede">moonraker.log.2025-10-18</div>
<div class="t" style="left:1657px;top:637px;font-size:14px;color:#dedede;-webkit-text-stroke:0.35px #dedede">2025-10-18 17:07</div>
<div class="t" style="left:1790px;top:637px;font-size:14px;color:#dedede;-webkit-text-stroke:0.35px #dedede">30.4 kB</div>
<div class="a" style="left:989px;top:664px;width:867px;height:1px;background:#3b3b3e"></div>
<svg class="a" style="left:1011px;top:673px" width="24" height="24" viewBox="0 0 24 24"><path fill="#a3a3a3" d="M13,9V3.5L18.5,9M6,2C4.89,2 4,2.89 4,4V20A2,2 0 0,0 6,22H18A2,2 0 0,0 20,20V8L14,2H6Z"/><path fill="#28282b" d="M13,15.5H23.2V24H13ZM13.9,16.4A4.2,4.2 0 0,1 22.3,16.4V17H13.9Z"/><path fill="#a3a3a3" d="M15.1,16.6A3,3 0 0,1 21.1,16.6V17.2H15.1ZM14.1,16.9H22.1V22A1,1 0 0,1 21.1,23H15.1A1,1 0 0,1 14.1,22Z"/><circle cx="18.1" cy="16.5" r="1.2" fill="#28282b"/></svg>
<div class="t" style="left:1056px;top:677px;font-size:14px;color:#dedede;-webkit-text-stroke:0.35px #dedede">klippy.log.2025-10-17</div>
<div class="t" style="left:1657px;top:677px;font-size:14px;color:#dedede;-webkit-text-stroke:0.35px #dedede">2025-10-17 19:14</div>
<div class="t" style="left:1790px;top:677px;font-size:14px;color:#dedede;-webkit-text-stroke:0.35px #dedede">6.4 MB</div>
<div class="a" style="left:989px;top:704px;width:867px;height:1px;background:#3b3b3e"></div>
<svg class="a" style="left:1011px;top:713px" width="24" height="24" viewBox="0 0 24 24"><path fill="#a3a3a3" d="M13,9V3.5L18.5,9M6,2C4.89,2 4,2.89 4,4V20A2,2 0 0,0 6,22H18A2,2 0 0,0 20,20V8L14,2H6Z"/><path fill="#28282b" d="M13,15.5H23.2V24H13ZM13.9,16.4A4.2,4.2 0 0,1 22.3,16.4V17H13.9Z"/><path fill="#a3a3a3" d="M15.1,16.6A3,3 0 0,1 21.1,16.6V17.2H15.1ZM14.1,16.9H22.1V22A1,1 0 0,1 21.1,23H15.1A1,1 0 0,1 14.1,22Z"/><circle cx="18.1" cy="16.5" r="1.2" fill="#28282b"/></svg>
<div class="t" style="left:1056px;top:717px;font-size:14px;color:#dedede;-webkit-text-stroke:0.35px #dedede">klippy.log.2025-10-16</div>
<div class="t" style="left:1657px;top:717px;font-size:14px;color:#dedede;-webkit-text-stroke:0.35px #dedede">2025-10-16 19:27</div>
<div class="t" style="left:1790px;top:717px;font-size:14px;color:#dedede;-webkit-text-stroke:0.35px #dedede">3.9 MB</div>
<div class="a" style="left:989px;top:744px;width:867px;height:1px;background:#3b3b3e"></div>
<svg class="a" style="left:1011px;top:753px" width="24" height="24" viewBox="0 0 24 24"><path fill="#a3a3a3" d="M13,9V3.5L18.5,9M6,2C4.89,2 4,2.89 4,4V20A2,2 0 0,0 6,22H18A2,2 0 0,0 20,20V8L14,2H6Z"/><path fill="#28282b" d="M13,15.5H23.2V24H13ZM13.9,16.4A4.2,4.2 0 0,1 22.3,16.4V17H13.9Z"/><path fill="#a3a3a3" d="M15.1,16.6A3,3 0 0,1 21.1,16.6V17.2H15.1ZM14.1,16.9H22.1V22A1,1 0 0,1 21.1,23H15.1A1,1 0 0,1 14.1,22Z"/><circle cx="18.1" cy="16.5" r="1.2" fill="#28282b"/></svg>
<div class="t" style="left:1056px;top:757px;font-size:14px;color:#dedede;-webkit-text-stroke:0.35px #dedede">klippy.log.2025-10-15</div>
<div class="t" style="left:1657px;top:757px;font-size:14px;color:#dedede;-webkit-text-stroke:0.35px #dedede">2025-10-15 21:37</div>
<div class="t" style="left:1790px;top:757px;font-size:14px;color:#dedede;-webkit-text-stroke:0.35px #dedede">528.6 kB</div>
<div class="a" style="left:989px;top:784px;width:867px;height:1px;background:#3b3b3e"></div>
<svg class="a" style="left:1011px;top:793px" width="24" height="24" viewBox="0 0 24 24"><path fill="#a3a3a3" d="M13,9V3.5L18.5,9M6,2C4.89,2 4,2.89 4,4V20A2,2 0 0,0 6,22H18A2,2 0 0,0 20,20V8L14,2H6Z"/><path fill="#28282b" d="M13,15.5H23.2V24H13ZM13.9,16.4A4.2,4.2 0 0,1 22.3,16.4V17H13.9Z"/><path fill="#a3a3a3" d="M15.1,16.6A3,3 0 0,1 21.1,16.6V17.2H15.1ZM14.1,16.9H22.1V22A1,1 0 0,1 21.1,23H15.1A1,1 0 0,1 14.1,22Z"/><circle cx="18.1" cy="16.5" r="1.2" fill="#28282b"/></svg>
<div class="t" style="left:1056px;top:797px;font-size:14px;color:#dedede;-webkit-text-stroke:0.35px #dedede">mmu.log</div>
<div class="t" style="left:1657px;top:797px;font-size:14px;color:#dedede;-webkit-text-stroke:0.35px #dedede">2025-10-14 14:16</div>
<div class="t" style="left:1790px;top:797px;font-size:14px;color:#dedede;-webkit-text-stroke:0.35px #dedede">5.0 kB</div>
<div class="a" style="left:989px;top:824px;width:867px;height:1px;background:#3b3b3e"></div>
<svg class="a" style="left:1011px;top:834px" width="24" height="24" viewBox="0 0 24 24"><path fill="#a3a3a3" d="M13,9V3.5L18.5,9M6,2C4.89,2 4,2.89 4,4V20A2,2 0 0,0 6,22H18A2,2 0 0,0 20,20V8L14,2H6Z"/><path fill="#28282b" d="M13,15.5H23.2V24H13ZM13.9,16.4A4.2,4.2 0 0,1 22.3,16.4V17H13.9Z"/><path fill="#a3a3a3" d="M15.1,16.6A3,3 0 0,1 21.1,16.6V17.2H15.1ZM14.1,16.9H22.1V22A1,1 0 0,1 21.1,23H15.1A1,1 0 0,1 14.1,22Z"/><circle cx="18.1" cy="16.5" r="1.2" fill="#28282b"/></svg>
<div class="t" style="left:1056px;top:838px;font-size:14px;color:#dedede;-webkit-text-stroke:0.35px #dedede">mmu.log.2025-10-13</div>
<div class="t" style="left:1657px;top:838px;font-size:14px;color:#dedede;-webkit-text-stroke:0.35px #dedede">2025-10-13 18:32</div>
<div class="t" style="left:1790px;top:838px;font-size:14px;color:#dedede;-webkit-text-stroke:0.35px #dedede">3.1 kB</div>
<div class="a" style="left:66px;top:491px;width:146px;height:32px;border-radius:4px;background:rgba(12,12,13,0.86)"></div>
<div class="t" style="left:82px;top:499px;font-size:14px;color:#f0f0f0;-webkit-text-stroke:0.3px #f0f0f0">Configuration</div>
<div class="a" style="left:177px;top:498px;width:20px;height:18px;border-radius:3px;background:rgba(90,90,92,0.75)"></div>
<div class="t" style="left:183px;top:502px;font-size:11px;font-weight:bold;color:#e6e6e6">x</div>
<svg class="a" style="left:0;top:0" width="600" height="520" viewBox="0 0 600 520"><path d="M584,297.5L85.3,483.6L82.4,477.9L64,500.6L91.4,504L92.7,498Z" fill="#f93838"/></svg>
<div class="t" style="left:1665px;top:1006px;font-size:16px;letter-spacing:-0.13px;color:#8a8a8a">© 2025 fluidd: v1.34.4-4eefb963</div>
<div class="a" style="left:0;top:1011px;width:163px;height:21px;background:#d3e3fd;border-radius:0 4px 0 0;box-shadow:0 0 1px rgba(0,0,0,.5)"></div>
<div class="t" style="left:6px;top:1015px;font-size:13px;color:#3c4043">192.168.1.125/#/configure</div>
<div class="a" style="left:1905px;top:87px;width:15px;height:945px;background:#fdfdfd"></div>
<svg class="a" style="left:1905px;top:87px" width="15" height="945" viewBox="0 0 15 945"><path d="M3,12H12L7.5,5Z" fill="#a3a3a3"/><path d="M3,934H12L7.5,941Z" fill="#a3a3a3"/></svg>
</body></html>
